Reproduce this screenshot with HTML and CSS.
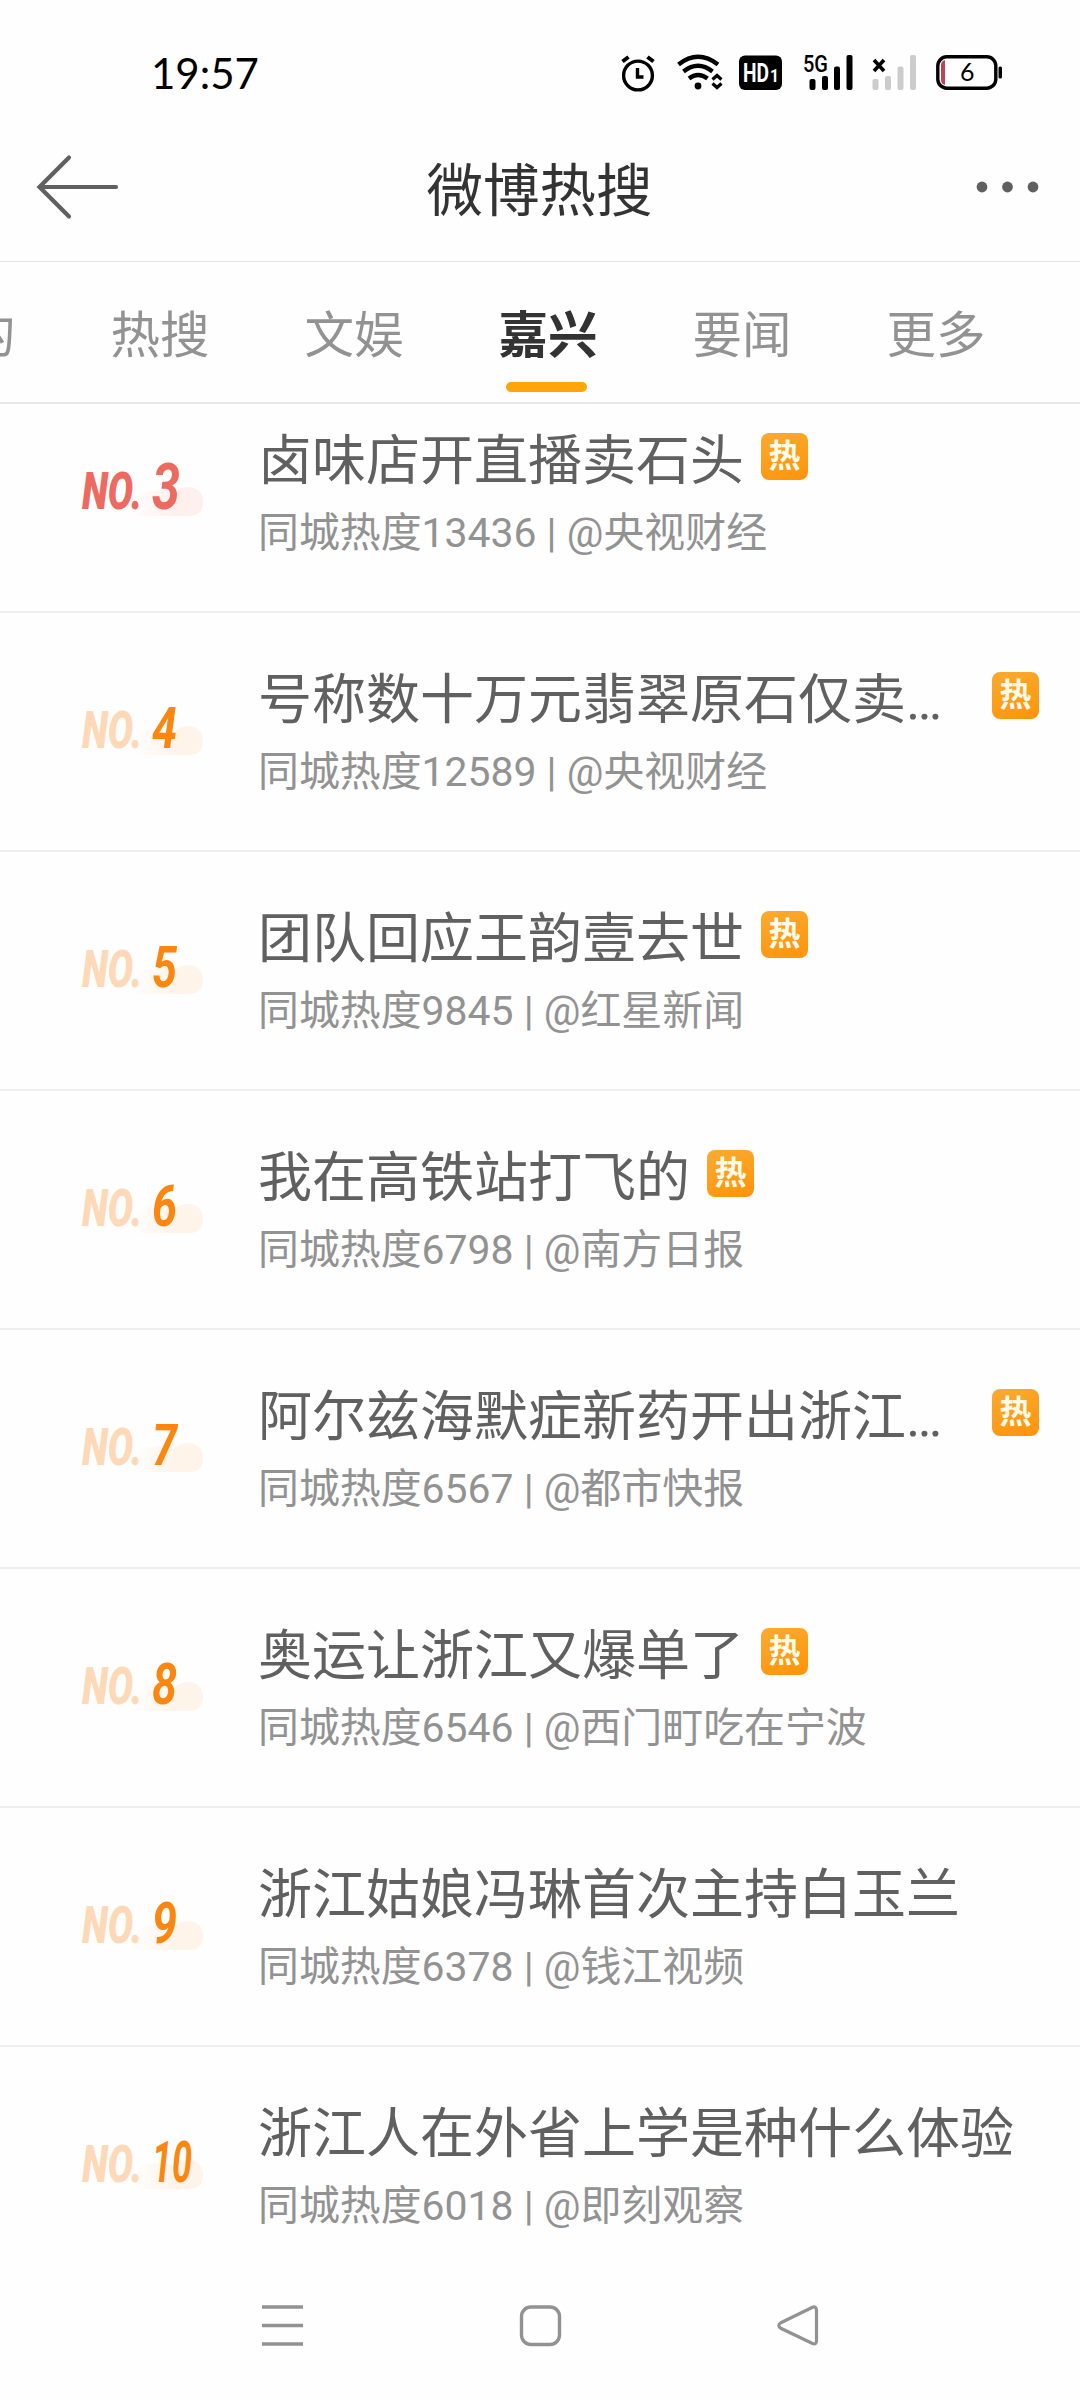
FILE: index.html
```
<!DOCTYPE html>
<html lang="zh-CN">
<head>
    <meta charset="UTF-8">
    <title>微博热搜</title>
    <meta name="viewport" content="width=device-width, initial-scale=1.0">
    <link rel="stylesheet" href="styles.css">
</head>
<body>
    <div class="status-bar">
        <span class="time">19:57</span>
        <div class="status-icons">
            <svg class="ic-alarm" width="34" height="38" viewBox="0 0 34 38" fill="none" stroke="#000" stroke-width="3.4">
                <circle cx="17" cy="21.500" r="14.4"/>
                <path d="M16.500 14v9h6"/>
                <path d="M1.500 7.500l6-4.500M32.500 7.500l-6-4.500" stroke-width="4"/>
            </svg>
            <svg class="ic-wifi" width="46" height="38" viewBox="0 0 46 38" fill="none" stroke="#000" stroke-width="4.400">
                <path d="M1.500 10.500Q21 -5 41 10.500M6.500 17.500Q21 6 35.500 17.500M12 24.500Q21 17.500 30.500 24.500"/>
                <circle cx="21" cy="32" r="3.400" fill="#000" stroke="none"/>
                <path d="M35.500 25.500l4.500-4 4.500 4M35.500 29.500l4.500 4 4.500-4" stroke-width="3.200"/>
            </svg>
            <svg class="ic-hd" width="44" height="38" viewBox="0 0 44 38">
                <rect x="0" y="1.500" width="43" height="34.500" rx="6"/>
                <text x="4" y="27.500" class="hd-text" textLength="26" lengthAdjust="spacingAndGlyphs">HD</text>
                <text x="31" y="27.500" class="hd-num" textLength="9" lengthAdjust="spacingAndGlyphs">1</text>
            </svg>
            <svg class="ic-5g" width="52" height="38" viewBox="0 0 52 38">
                <text x="0" y="17.500" class="net-text" textLength="25" lengthAdjust="spacingAndGlyphs">5G</text>
                <rect x="6.500" y="25" width="6" height="11" rx="2"/>
                <rect x="19" y="22" width="6" height="14" rx="2"/>
                <rect x="31" y="12.500" width="6" height="23.500" rx="2"/>
                <rect x="43.500" y="1" width="6" height="35" rx="2"/>
            </svg>
            <svg class="ic-nosim" width="44" height="38" viewBox="0 0 44 38" fill="#ccc">
                <path d="M2 6l10 11M12 6L2 17" stroke="#000" stroke-width="3.600"/>
                <rect x="0.500" y="25" width="6" height="11" rx="2"/>
                <rect x="13" y="22" width="6" height="14" rx="2"/>
                <rect x="25.500" y="12.500" width="6" height="23.500" rx="2"/>
                <rect x="38" y="1" width="6" height="35" rx="2"/>
            </svg>
            <svg class="ic-battery" width="66" height="38" viewBox="0 0 66 38">
                <rect x="1.800" y="2.800" width="58" height="31.400" rx="9" fill="none" stroke="#000" stroke-width="3.400"/>
                <rect x="62.500" y="12.500" width="3.500" height="12" rx="1.500"/>
                <path d="M5 11q0-4 4-5v25q-4-1-4-5z" fill="#bb4455"/>
                <text x="24" y="27" class="battery-text">6</text>
            </svg>
        </div>
    </div>

    <div class="header">
        <svg class="back" width="84" height="68" viewBox="0 0 84 68" fill="none" stroke="#606060" stroke-width="4.200" stroke-linecap="round">
            <path d="M33 4.500L3.500 34 33 63.500M5 34h75"/>
        </svg>
        <h1>微博热搜</h1>
        <svg class="more" width="64" height="12" viewBox="0 0 64 12" fill="#606060">
            <circle cx="6" cy="6" r="5.400"/>
            <circle cx="31.500" cy="6" r="5.400"/>
            <circle cx="57" cy="6" r="5.400"/>
        </svg>
    </div>

    <div class="tabs">
        <span class="tab">我的</span>
        <span class="tab">热搜</span>
        <span class="tab">文娱</span>
        <span class="tab active">嘉兴</span>
        <span class="tab">要闻</span>
        <span class="tab">更多</span>
    </div>

    <div class="list" id="list"></div>

    <div class="nav-bar">
        <svg width="44" height="44" viewBox="0 0 44 44" stroke="#929292" stroke-width="3.600">
            <path d="M2 4h41M2 22.500h41M2 41h41"/>
        </svg>
        <svg width="44" height="44" viewBox="0 0 44 44" fill="none" stroke="#929292" stroke-width="3.400">
            <rect x="3.500" y="4" width="38" height="37.500" rx="9.500"/>
        </svg>
        <svg width="44" height="44" viewBox="0 0 44 44" fill="none" stroke="#929292" stroke-width="3.200">
            <path d="M4.800 19.700L36.500 4.200Q40.500 3 40.500 7.500V37.500Q40.500 42 36.500 40.500L4.800 25.300Q0.800 22.500 4.800 19.700Z"/>
        </svg>
    </div>

    <script>
        const items = [
            { no: 3, title: '卤味店开直播卖石头', heat: 13436, from: '央视财经', hot: true },
            { no: 4, title: '号称数十万元翡翠原石仅卖…', heat: 12589, from: '央视财经', hot: true, long: true },
            { no: 5, title: '团队回应王韵壹去世', heat: 9845, from: '红星新闻', hot: true },
            { no: 6, title: '我在高铁站打飞的', heat: 6798, from: '南方日报', hot: true },
            { no: 7, title: '阿尔兹海默症新药开出浙江…', heat: 6567, from: '都市快报', hot: true, long: true },
            { no: 8, title: '奥运让浙江又爆单了', heat: 6546, from: '西门町吃在宁波', hot: true },
            { no: 9, title: '浙江姑娘冯琳首次主持白玉兰', heat: 6378, from: '钱江视频' },
            { no: 10, title: '浙江人在外省上学是种什么体验', heat: 6018, from: '即刻观察' }
        ];

        function rank(no) {
            const w = no > 9 ? 40 : no <= 3 ? 28 : 25;
            return `<svg class="rank ${no <= 3 ? 'top' : ''}" width="130" height="64" viewBox="0 0 130 64">
                <defs>
                    <linearGradient id="cloud${no}">
                        <stop class="cloud-from" offset="0"/>
                        <stop class="cloud-to" offset="0.6"/>
                    </linearGradient>
                </defs>
                <path fill="url(#cloud${no})" d="M58 59Q50 59 50 51Q50 44 58 42Q61 33 73 34Q84 31 94 36Q101 29 110 30Q123 32 123 45Q123 59 109 59Z"/>
                <text class="rank-label" x="2" y="52" textLength="60" lengthAdjust="spacingAndGlyphs">NO.</text>
                <text class="rank-num" x="72" y="52" textLength="${w}" lengthAdjust="spacingAndGlyphs">${no}</text>
            </svg>`;
        }

        document.getElementById('list').innerHTML = items.map(i => `
            <div class="item">
                ${rank(i.no)}
                <div class="info">
                    <div class="title-row">
                        <span class="title ${i.long ? 'long' : ''}">${i.title}</span>
                        ${i.hot ? '<span class="hot">热</span>' : ''}
                    </div>
                    <div class="sub">同城热度${i.heat} | @${i.from}</div>
                </div>
            </div>`).join('');
    </script>
</body>
</html>
```
FILE: styles.css
```
* { box-sizing: border-box; }
body {
    margin: 0;
    width: 1080px;
    height: 2400px;
    overflow: hidden;
    display: flex;
    flex-direction: column;
    background: #fefefe;
    font-family: Roboto, "Noto Sans CJK SC", sans-serif;
}
svg { display: block; flex: none; overflow: visible; }

/* status bar */
.status-bar {
    height: 116px;
    flex: none;
    display: flex;
    justify-content: space-between;
    padding: 54px 78px 0 151px;
}
.time {
    font-family: Lato, sans-serif;
    font-size: 42px;
    line-height: 38px;
    color: #000;
}
.status-icons { display: flex; }
.ic-wifi { margin-left: 22px; }
.ic-hd { margin-left: 16px; }
.ic-5g { margin-left: 20px; }
.ic-nosim { margin-left: 17px; }
.ic-battery { margin-left: 20px; }
.hd-text { font-size: 26px; font-weight: 700; fill: #fff; }
.hd-num { font-size: 18px; font-weight: 700; fill: #fff; }
.net-text { font-size: 23px; font-weight: 500; }
.battery-text { font-family: Lato, sans-serif; font-size: 25px; }

/* header */
.header {
    height: 146px;
    flex: none;
    display: flex;
    align-items: center;
    justify-content: space-between;
    padding: 0 40px 4px 36px;
    border-bottom: 1px solid #e6e6e6;
}
.header h1 {
    margin: 11px 0 0 -17px;
    font-size: 56.5px;
    line-height: 64px;
    font-weight: 400;
    color: #333;
}

/* tabs */
.tabs {
    height: 142px;
    flex: none;
    display: flex;
    margin-left: -131px;
    border-bottom: 2px solid #e8e8e8;
}
.tab {
    flex: none;
    width: 194px;
    padding-top: 44px;
    text-align: center;
    font-size: 49.5px;
    line-height: 60px;
    color: #929292;
}
.active { color: #333; font-weight: 700; }
.active::after {
    content: "";
    display: block;
    width: 81px;
    height: 10px;
    margin: 16px auto 0 55px;
    border-radius: 5px;
    background: #ffa50a;
}

/* list */
.list { height: 1880px; flex: none; overflow: hidden; }
.item {
    height: 239px;
    display: flex;
    padding: 53px 41px 0 80px;
    border-bottom: 2px solid #eee;
}
.item:first-child { margin-top: -30px; }
.item:last-child { border-bottom: 0; }
.rank { margin: 30px 48px 0 0; }
.cloud-from { stop-color: #fefefe; }
.cloud-to { stop-color: #fff4ea; }
.rank-label, .rank-num { font-style: italic; font-weight: 700; }
.rank-label { font-size: 51px; font-weight: 900; fill: #fdd9b8; }
.rank-num { font-size: 57px; fill: #fb8610; }
.top .cloud-to { stop-color: #fff0ee; }
.top .rank-label { fill: #ed6a60; }
.top .rank-num { font-size: 65px; fill: #ed6a60; }
.info { flex: 1; }
.title-row { display: flex; height: 67px; }
.title {
    padding-top: 3px;
    font-size: 54px;
    line-height: 64px;
    color: #606060;
    white-space: nowrap;
}
.long { flex: 1; }
.hot {
    width: 47px;
    height: 47px;
    margin: 6px 0 0 17px;
    border-radius: 8px;
    background: linear-gradient(160deg, #f9ab30, #ff930a);
    color: #fffbe8;
    font-size: 32px;
    line-height: 47px;
    font-weight: 700;
    text-align: center;
}
.sub {
    margin-top: 14px;
    font-size: 40.9px;
    line-height: 50px;
    color: #929292;
    white-space: nowrap;
}

/* bottom navigation */
.nav-bar {
    flex: 1;
    display: flex;
    justify-content: space-between;
    padding: 19px 260px 0;
}
```
